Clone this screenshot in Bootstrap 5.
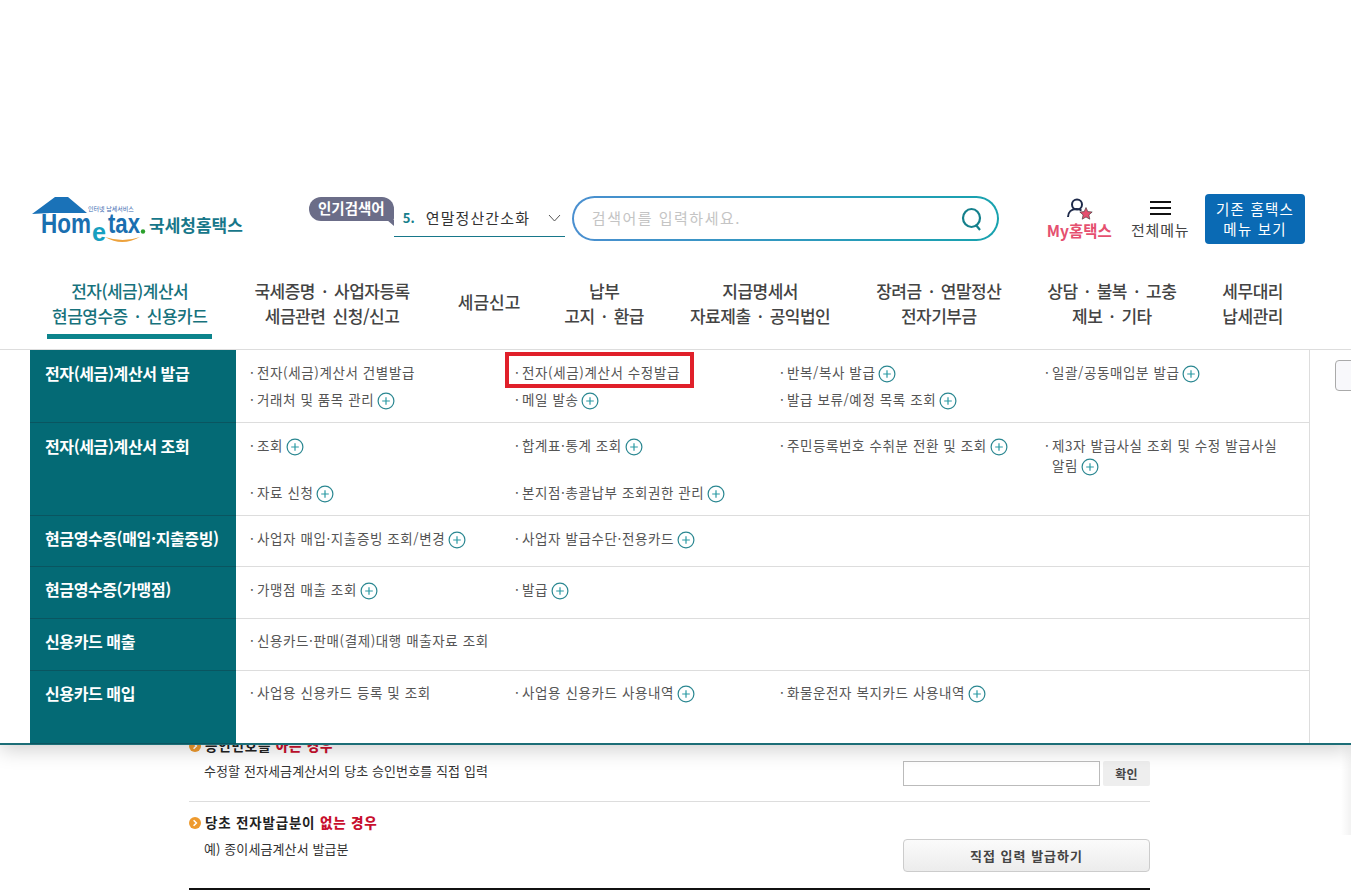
<!DOCTYPE html>
<html lang="ko">
<head>
    <meta charset="UTF-8">
    <title>국세청 홈택스</title>
    <meta name="viewport" content="width=device-width, initial-scale=1">
    <link href="https://cdn.jsdelivr.net/npm/bootstrap@5.3.0/dist/css/bootstrap.min.css" rel="stylesheet">
    <style>
        body { font-family: "Noto Sans CJK KR", "Liberation Sans", sans-serif; background: #fff; color: #333; }
        .page-wrap { width: 1351px; height: 892px; overflow: hidden; position: relative; }

        /* header */
        .head-row { padding: 194px 46px 0 30px; height: 244px; }
        .logo-box { width: 213px; height: 50px; }
        .logo-name { font-size: 17px; font-weight: 700; color: #17778a; line-height: 50px; margin: 6px 0 0 3px; }
        .rank-wrap { margin-left: 66px; width: 256px; padding-top: 3px; }
        .rank-badge { width: 85px; height: 24px; line-height: 22px; border-radius: 12px 12px 3px 12px; background: #6b6d88; color: #fff; font-size: 14.5px; font-weight: 700; text-align: center; position: relative; }
        .rank-badge::after { content: ""; position: absolute; right: 0; bottom: -5px; border-top: 6px solid #6b6d88; border-left: 7px solid transparent; }
        .rank-box { width: 171px; height: 37px; margin-top: 3px; border-bottom: 1px solid #17778a; font-size: 15px; letter-spacing: 1.1px; color: #333; }
        .rank-num { color: #17808c; font-weight: 700; font-size: 13px; letter-spacing: 0; margin: 0 11px 0 9px; }
        .search-box { width: 428px; height: 45px; margin-left: 7px; margin-top: 2px; border: 2px solid transparent; border-radius: 23px; background: linear-gradient(#fff, #fff) padding-box, linear-gradient(90deg, #4a8fd0, #17a2ae) border-box; padding: 0 14px 0 18px; }
        .search-hint { color: #c4c4c4; font-size: 15px; letter-spacing: 1.5px; }
        .my-box { width: 70px; margin-left: 45px; font-size: 15.5px; color: #e5506f; font-weight: 700; line-height: 18px; text-align: center; }
        .all-box { width: 62px; margin-left: 15px; font-size: 15px; color: #444; line-height: 18px; text-align: center; letter-spacing: .8px; }
        .old-btn { width: 100px; height: 50px; margin-left: 14px; background: #0a6ab4; color: #fff; border-radius: 4px; font-size: 14.5px; line-height: 20px; text-align: center; padding-top: 5px; letter-spacing: 1.2px; }

        /* main nav */
        .main-nav { padding: 34px 0 0 47px; gap: 46px; height: 106px; border-bottom: 1px solid #ddd; }
        .nav-cell { font-size: 17px; line-height: 25px; font-weight: 500; letter-spacing: -.5px; word-spacing: 3px; color: #444; text-align: center; white-space: nowrap; }
        .nav-cell.on { color: #17727c; padding: 0 5px; height: 61px; margin-right: -4px; border-bottom: 5px solid #0c848c; }
        .nav-mid { padding-top: 11px; letter-spacing: 0; margin-left: 2px; margin-right: -2px; }

        /* mega menu */
        .mega-panel { position: absolute; left: 0; top: 350px; width: 100%; height: 395px; padding: 0 41px 0 30px; background: #fff; border-bottom: 2px solid #1c6e77; box-shadow: 0 4px 20px rgba(0,0,0,.2); clip-path: inset(0 0 -40px 0); }
        .mega-inner { border-right: 1px solid #ddd; height: 100%; }
        .mega-row { display: flex; border-bottom: 1px solid #ddd; }
        .mega-row:last-child { border-bottom: 0; flex-grow: 1; }
        .row-a { height: 73px; }
        .row-b { height: 93px; }
        .row-c { height: 51px; }
        .row-d { height: 52px; }
        .mega-head { width: 206px; flex: none; background: #046a75; color: #fff; font-size: 16px; font-weight: 700; letter-spacing: -.4px; line-height: 20px; padding: 12px 0 0 15px; box-shadow: 0 1px 0 #0a5560; }
        .row-a .mega-head, .row-b .mega-head { padding-top: 13px; }
        .mega-list { display: grid; grid-template-columns: repeat(4, 265px); row-gap: 6px; padding: 12px 0 0 14px; align-content: start; }
        .row-low .mega-list { padding-top: 11px; }
        .mega-item { font-size: 13.5px; letter-spacing: .6px; line-height: 20px; color: #555; padding-left: 7px; text-indent: -7px; padding-right: 20px; }
        .mega-item svg { width: 18px; height: 18px; vertical-align: -5px; margin-left: 3px; }
        .bul { display: inline-block; width: 7px; font-style: normal; text-indent: 0; letter-spacing: 0; }
        .picked { position: relative; }
        .picked::after { content: ""; position: absolute; left: -10px; right: -14px; top: -10px; bottom: -6px; border: 4px solid #e0202a; }
        .side-tab { position: absolute; left: 1335px; top: 360px; width: 40px; height: 31px; background: #f8f8fb; border: 1px solid #aaa; border-radius: 4px; }
        .edge-fade { position: absolute; left: 1341px; top: 745px; width: 10px; height: 90px; background: linear-gradient(90deg, rgba(0,0,0,0), rgba(0,0,0,.05)); }

        /* content under the menu */
        .under-wrap { position: absolute; left: 189px; top: 736px; width: 961px; font-size: 13px; letter-spacing: .1px; color: #333; }
        .under-title { font-size: 13.5px; font-weight: 700; color: #222; line-height: 18px; letter-spacing: .8px; }
        .under-title b { color: #c8102e; }
        .under-title svg { width: 12px; height: 12px; margin-right: 4px; vertical-align: -1px; }
        .under-row { padding-left: 15px; margin-top: 7px; }
        .under-in { width: 197px; height: 25px; border: 1px solid #bbb; background: #fff; }
        .under-ok { width: 47px; height: 25px; margin-left: 3px; background: #eee; border-radius: 2px; font-size: 12px; font-weight: 700; color: #444; line-height: 25px; text-align: center; }
        .under-line { border-bottom: 1px solid #ddd; padding-top: 15px; margin-bottom: 11px; }
        .under-btn { width: 247px; height: 33px; line-height: 31px; text-align: center; border: 1px solid #ccc; border-radius: 4px; background: linear-gradient(#fbfbfb, #ececec); font-weight: 700; color: #444; letter-spacing: 1px; }
        .under-end { border-top: 2px solid #111; margin-top: 16px; }
    </style>
</head>
<body>
<svg width="0" height="0" class="d-block position-absolute">
    <symbol id="plus-ico" viewBox="0 0 18 18">
        <circle cx="9" cy="9" r="7.9" fill="#fff" stroke="#2a8791" stroke-width="1.2"/>
        <path d="M9 5.2v7.6M5.2 9h7.6" stroke="#2a9aa3" stroke-width="1.2"/>
    </symbol>
    <symbol id="dot-ico" viewBox="0 0 12 12">
        <circle cx="6" cy="6" r="6" fill="#ee9a2e"/>
        <path d="M4.6 3.2 7.4 6 4.6 8.800" fill="none" stroke="#fff" stroke-width="1.500"/>
    </symbol>
</svg>
<div class="page-wrap">
    <!-- Header -->
    <div class="head-row d-flex">
        <div class="logo-box d-flex flex-none">
            <svg class="align-self-start flex-none" width="116" height="56" viewBox="0 0 116 56">
                <path d="M2 20 25 3H38L57 19H20z" fill="#1a72b8"/>
                <text x="11" y="39" font-family="Liberation Sans" font-weight="700" font-size="27" fill="#1a6fb0" textLength="50" lengthAdjust="spacingAndGlyphs">Hom</text>
                <text x="62" y="47" font-family="Liberation Sans" font-weight="700" font-size="26" fill="#17a0c0" textLength="14" lengthAdjust="spacingAndGlyphs">e</text>
                <text x="78" y="39" font-family="Liberation Sans" font-weight="700" font-size="27" fill="#1a6fb0" textLength="32" lengthAdjust="spacingAndGlyphs">tax</text>
                <circle cx="113" cy="37.500" r="2.200" fill="#2aa02a"/>
                <path d="M75 43q17 10 35 0q-17 6-35 0z" fill="#eda23c"/>
                <text x="58" y="17" font-family="Noto Sans CJK KR" font-size="6" fill="#3a6ab0">인터넷 납세서비스</text>
            </svg>
            <div class="logo-name text-nowrap">국세청홈택스</div>
        </div>
        <div class="rank-wrap d-flex align-items-start flex-none">
            <div class="rank-badge flex-none">인기검색어</div>
            <div class="rank-box d-flex align-items-center text-nowrap flex-none">
                <span class="rank-num">5.</span>연말정산간소화
                <svg class="ms-auto me-1" width="13" height="8" viewBox="0 0 13 8"><path d="M1 1l5.500 6L12 1" fill="none" stroke="#555"/></svg>
            </div>
        </div>
        <div class="search-box d-flex align-items-center flex-none">
            <span class="search-hint">검색어를 입력하세요.</span>
            <svg class="ms-auto" width="22" height="24" viewBox="0 0 22 24"><ellipse cx="10.500" cy="11" rx="8.500" ry="9" fill="none" stroke="#14808c" stroke-width="2.200"/><path d="M15 18l4 5" stroke="#14808c" stroke-width="2.200"/></svg>
        </div>
        <div class="my-box flex-none">
            <svg class="d-block mx-auto mt-1" width="28" height="23" viewBox="0 0 28 23">
                <circle cx="12" cy="6.500" r="5" fill="none" stroke="#1e2a4a" stroke-width="2"/>
                <path d="M3 19c0-5 3.500-8 8.500-8 2 0 3.500.5 5 1.500" fill="none" stroke="#1e2a4a" stroke-width="2"/>
                <path d="M21 9.500 22.800 13.600 27.200 14 23.900 16.900 24.800 21.200 21 19 17.200 21.200 18.100 16.900 14.800 14 19.200 13.600z" fill="#e5506f" stroke="#333" stroke-width=".6"/>
            </svg>
            <div class="text-nowrap">My홈택스</div>
        </div>
        <div class="all-box flex-none">
            <svg class="d-block mx-auto mt-1" width="21" height="23" viewBox="0 0 21 23"><path d="M0 4h21M0 10h21M0 16h21" stroke="#111" stroke-width="2"/></svg>
            <div class="text-nowrap">전체메뉴</div>
        </div>
        <div class="old-btn flex-none">기존 홈택스<br>메뉴 보기</div>
    </div>

    <!-- Main nav -->
    <nav class="main-nav d-flex">
        <div class="nav-cell on">전자(세금)계산서<br>현금영수증 · 신용카드</div>
        <div class="nav-cell">국세증명 · 사업자등록<br>세금관련 신청/신고</div>
        <div class="nav-cell nav-mid">세금신고</div>
        <div class="nav-cell">납부<br>고지 · 환급</div>
        <div class="nav-cell">지급명세서<br>자료제출 · 공익법인</div>
        <div class="nav-cell">장려금 · 연말정산<br>전자기부금</div>
        <div class="nav-cell">상담 · 불복 · 고충<br>제보 · 기타</div>
        <div class="nav-cell">세무대리<br>납세관리</div>
    </nav>

    <!-- Content under the open menu -->
    <div class="under-wrap">
        <div class="under-title"><svg><use href="#dot-ico"/></svg>승인번호를 <b>아는 경우</b></div>
        <div class="under-row d-flex justify-content-between align-items-start">
            <span>수정할 전자세금계산서의 당초 승인번호를 직접 입력</span>
            <div class="d-flex"><div class="under-in"></div><div class="under-ok">확인</div></div>
        </div>
        <div class="under-line"></div>
        <div class="under-title"><svg><use href="#dot-ico"/></svg>당초 전자발급분이 <b>없는 경우</b></div>
        <div class="under-row d-flex justify-content-between mt-2">
            <span>예) 종이세금계산서 발급분</span>
            <div class="under-btn">직접 입력 발급하기</div>
        </div>
        <div class="under-end"></div>
    </div>

    <!-- Open mega menu -->
    <div class="mega-panel">
        <div class="mega-inner d-flex flex-column">
            <div class="mega-row row-a">
                <div class="mega-head">전자(세금)계산서 발급</div>
                <div class="mega-list">
                    <div class="mega-item"><i class="bul">·</i>전자(세금)계산서 건별발급</div>
                    <div class="mega-item"><span class="picked"><i class="bul">·</i>전자(세금)계산서 수정발급</span></div>
                    <div class="mega-item"><i class="bul">·</i>반복/복사 발급<svg><use href="#plus-ico"/></svg></div>
                    <div class="mega-item"><i class="bul">·</i>일괄/공동매입분 발급<svg><use href="#plus-ico"/></svg></div>
                    <div class="mega-item"><i class="bul">·</i>거래처 및 품목 관리<svg><use href="#plus-ico"/></svg></div>
                    <div class="mega-item"><i class="bul">·</i>메일 발송<svg><use href="#plus-ico"/></svg></div>
                    <div class="mega-item"><i class="bul">·</i>발급 보류/예정 목록 조회<svg><use href="#plus-ico"/></svg></div>
                </div>
            </div>
            <div class="mega-row row-b">
                <div class="mega-head">전자(세금)계산서 조회</div>
                <div class="mega-list">
                    <div class="mega-item"><i class="bul">·</i>조회<svg><use href="#plus-ico"/></svg></div>
                    <div class="mega-item"><i class="bul">·</i>합계표·통계 조회<svg><use href="#plus-ico"/></svg></div>
                    <div class="mega-item"><i class="bul">·</i>주민등록번호 수취분 전환 및 조회<svg><use href="#plus-ico"/></svg></div>
                    <div class="mega-item"><i class="bul">·</i>제3자 발급사실 조회 및 수정 발급사실 알림<svg><use href="#plus-ico"/></svg></div>
                    <div class="mega-item"><i class="bul">·</i>자료 신청<svg><use href="#plus-ico"/></svg></div>
                    <div class="mega-item"><i class="bul">·</i>본지점·총괄납부 조회권한 관리<svg><use href="#plus-ico"/></svg></div>
                </div>
            </div>
            <div class="mega-row row-c">
                <div class="mega-head">현금영수증(매입·지출증빙)</div>
                <div class="mega-list">
                    <div class="mega-item"><i class="bul">·</i>사업자 매입·지출증빙 조회/변경<svg><use href="#plus-ico"/></svg></div>
                    <div class="mega-item"><i class="bul">·</i>사업자 발급수단·전용카드<svg><use href="#plus-ico"/></svg></div>
                </div>
            </div>
            <div class="mega-row row-d">
                <div class="mega-head">현금영수증(가맹점)</div>
                <div class="mega-list">
                    <div class="mega-item"><i class="bul">·</i>가맹점 매출 조회<svg><use href="#plus-ico"/></svg></div>
                    <div class="mega-item"><i class="bul">·</i>발급<svg><use href="#plus-ico"/></svg></div>
                </div>
            </div>
            <div class="mega-row row-d row-low">
                <div class="mega-head">신용카드 매출</div>
                <div class="mega-list">
                    <div class="mega-item text-nowrap"><i class="bul">·</i>신용카드·판매(결제)대행 매출자료 조회</div>
                </div>
            </div>
            <div class="mega-row row-low">
                <div class="mega-head">신용카드 매입</div>
                <div class="mega-list">
                    <div class="mega-item"><i class="bul">·</i>사업용 신용카드 등록 및 조회</div>
                    <div class="mega-item"><i class="bul">·</i>사업용 신용카드 사용내역<svg><use href="#plus-ico"/></svg></div>
                    <div class="mega-item"><i class="bul">·</i>화물운전자 복지카드 사용내역<svg><use href="#plus-ico"/></svg></div>
                </div>
            </div>
        </div>
    </div>
    <div class="side-tab"></div>
    <div class="edge-fade"></div>
</div>
<script src="https://cdn.jsdelivr.net/npm/bootstrap@5.3.0/dist/js/bootstrap.bundle.min.js"></script>
</body>
</html>
